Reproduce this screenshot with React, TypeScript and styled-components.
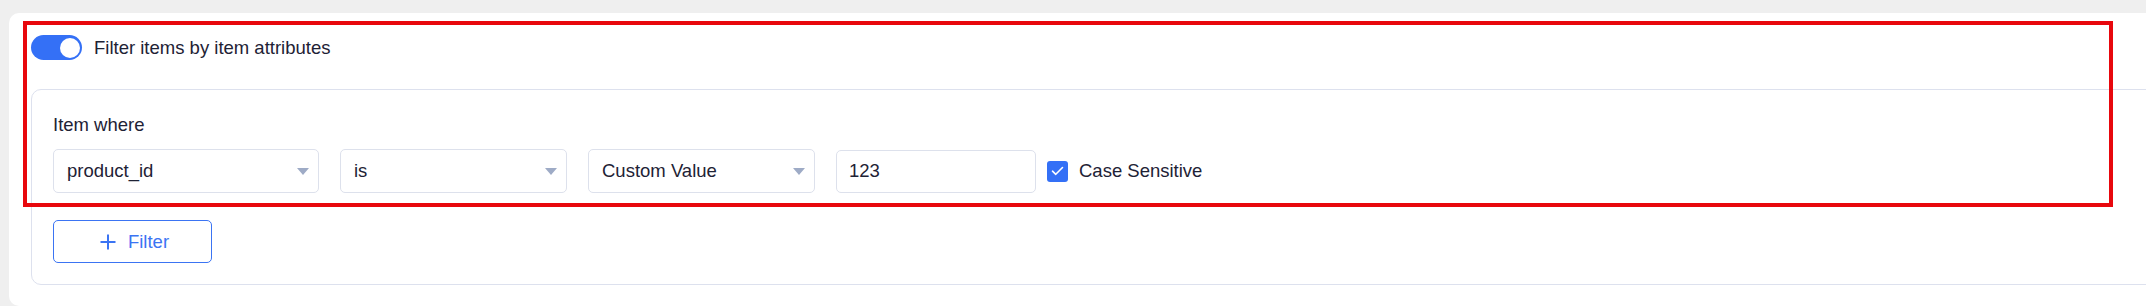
import React, { useState } from "react";
import styled, { createGlobalStyle } from "styled-components";

const GlobalStyle = createGlobalStyle`
  html, body {
    margin: 0;
    padding: 0;
    background: #efefef;
    overflow: hidden;
  }
  body {
    font-family: "Liberation Sans", Arial, sans-serif;
    color: #1e2235;
  }
  * { box-sizing: border-box; }
`;

const Page = styled.div`
  position: relative;
  height: 306px;
  overflow: hidden;
  padding-top: 13px;
`;

const Card = styled.section`
  margin: 0 -40px 0 9px;
  height: 293px;
  background: #ffffff;
  border-radius: 10px;
  padding: 22px 0 0 22px;
`;

const ToggleRow = styled.label`
  display: flex;
  align-items: center;
  gap: 12px;
  height: 25px;
  font-size: 18.5px;
  line-height: 24px;
  color: #1e2235;
  cursor: pointer;
`;

const Switch = styled.span<{ $on: boolean }>`
  position: relative;
  flex: none;
  width: 51px;
  height: 25px;
  border-radius: 13px;
  background: ${(p) => (p.$on ? "#3470f6" : "#c9cfdc")};
  &::after {
    content: "";
    position: absolute;
    top: 2.5px;
    left: ${(p) => (p.$on ? "28.5px" : "2.5px")};
    width: 20px;
    height: 20px;
    border-radius: 50%;
    background: #ffffff;
  }
`;

const Panel = styled.div`
  margin-top: 29px;
  border: 1px solid #dde1ee;
  border-radius: 10px;
  padding: 23px 0 21px 21px;
`;

const Label = styled.div`
  font-size: 18.5px;
  line-height: 24px;
  color: #1e2235;
`;

const FilterRow = styled.div`
  display: flex;
  align-items: center;
  margin-top: 12px;
  gap: 21px;
`;

const Select = styled.div<{ $w: number }>`
  position: relative;
  width: ${(p) => p.$w}px;
  height: 44px;
  border: 1px solid #dde1ec;
  border-radius: 5px;
  padding-left: 13px;
  display: flex;
  align-items: center;
  font-size: 18.5px;
  color: #1e2235;
  &::after {
    content: "";
    position: absolute;
    right: 9px;
    top: 18px;
    border-left: 6.5px solid transparent;
    border-right: 6.5px solid transparent;
    border-top: 7px solid #9eabc6;
  }
`;

const TextInput = styled.div`
  width: 200px;
  height: 43px;
  border: 1px solid #dde1ec;
  border-radius: 5px;
  padding-left: 12px;
  display: flex;
  align-items: center;
  font-size: 18.5px;
  color: #1e2235;
`;

const CheckGroup = styled.div`
  display: flex;
  align-items: center;
  gap: 11px;
  margin-left: -10px;
  font-size: 18.5px;
  color: #1e2235;
`;

const CheckBox = styled.span`
  width: 21px;
  height: 21px;
  border-radius: 3px;
  background: #3470f6;
  display: flex;
  align-items: center;
  justify-content: center;
`;

const AddButton = styled.button`
  margin-top: 27px;
  width: 159px;
  height: 43px;
  border: 1px solid #3b74f3;
  border-radius: 5px;
  background: #ffffff;
  color: #3b74f3;
  font-family: "Liberation Sans", Arial, sans-serif;
  font-size: 18.5px;
  display: flex;
  align-items: center;
  justify-content: center;
  gap: 12px;
  padding: 0 0 0 4px;
  cursor: pointer;
`;

const Highlight = styled.div`
  position: absolute;
  left: 23px;
  top: 21px;
  width: 2090px;
  height: 186px;
  border: 4px solid #e8070d;
  pointer-events: none;
`;

export default function App() {
  const [on, setOn] = useState(true);
  return (
    <>
      <GlobalStyle />
      <Page>
        <Card>
          <ToggleRow onClick={() => setOn(!on)}>
            <Switch $on={on} />
            Filter items by item attributes
          </ToggleRow>
          <Panel>
            <Label>Item where</Label>
            <FilterRow>
              <Select $w={266}>product_id</Select>
              <Select $w={227}>is</Select>
              <Select $w={227}>Custom Value</Select>
              <TextInput>123</TextInput>
              <CheckGroup>
                <CheckBox>
                  <svg width="13" height="10" viewBox="0 0 13 10" fill="none">
                    <path d="M1.5 5.2 L4.8 8.3 L11.5 1.5" stroke="#ffffff" strokeWidth="1.6" strokeLinecap="round" strokeLinejoin="round" />
                  </svg>
                </CheckBox>
                Case Sensitive
              </CheckGroup>
            </FilterRow>
            <AddButton>
              <svg width="16" height="16" viewBox="0 0 16 16" fill="none">
                <path d="M8 0.5 V15.5 M0.5 8 H15.5" stroke="#3b74f3" strokeWidth="2" />
              </svg>
              Filter
            </AddButton>
          </Panel>
        </Card>
        <Highlight />
      </Page>
    </>
  );
}
